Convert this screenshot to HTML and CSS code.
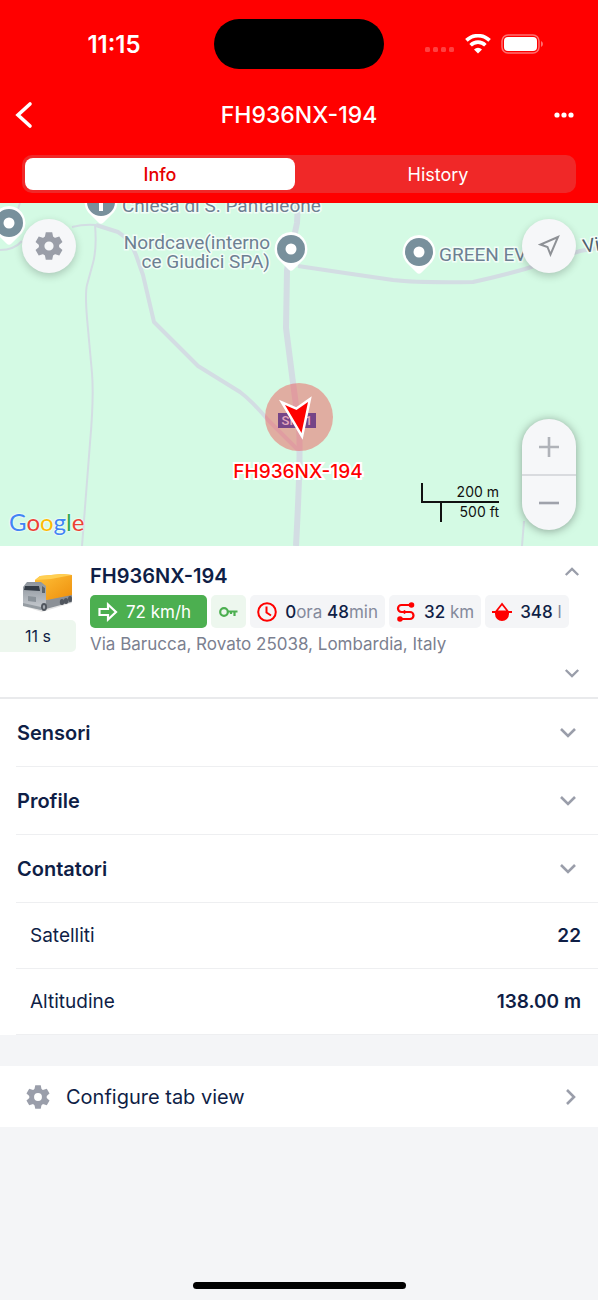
FILE: index.html
```html
<!DOCTYPE html>
<html lang="it">
<head>
    <meta charset="UTF-8">
    <meta name="viewport" content="width=device-width, initial-scale=1.0">
    <title>FH936NX-194</title>
    <link rel="stylesheet" href="styles.css">
</head>
<body>
    <svg class="defs" width="0" height="0" aria-hidden="true">
        <symbol id="gear" viewBox="-14 -14 28 28">
            <circle r="7.4" fill="none" stroke="currentColor" stroke-width="5.6"/>
            <g fill="currentColor">
                <path id="teeth" d="M-4.4 -8 L-3.2 -13.7 H3.2 L4.4 -8 Z M-4.4 8 L-3.2 13.7 H3.2 L4.4 8 Z"/>
                <use href="#teeth" transform="rotate(60)"/>
                <use href="#teeth" transform="rotate(120)"/>
            </g>
        </symbol>
        <symbol id="down" viewBox="0 0 18 12">
            <path d="M2 2 L9 9 L16 2" fill="none" stroke="currentColor" stroke-width="2.6"/>
        </symbol>
        <symbol id="pin" viewBox="0 0 36 42">
            <path d="M18 1 A17 17 0 0 1 31 28 L20.5 38.5 Q18 41 15.5 38.5 L5 28 A17 17 0 0 1 18 1 Z" fill="#fff"/>
            <circle cx="18" cy="18" r="14" fill="#78909c"/>
        </symbol>
    </svg>

    <header>
        <div class="status">
            <span class="time">11:15</span>
            <span class="island"></span>
            <span class="signals">
                <svg width="30" height="20" viewBox="0 0 30 20" fill="#ff4040">
                    <rect x="0" y="13" width="5" height="5" rx="1.5"/>
                    <rect x="8" y="13" width="5" height="5" rx="1.5"/>
                    <rect x="16" y="13" width="5" height="5" rx="1.5"/>
                    <rect x="24" y="13" width="5" height="5" rx="1.5"/>
                </svg>
                <svg width="26" height="20" viewBox="0 0 26 20" fill="none" stroke="#fff" stroke-width="3.6">
                    <path d="M1.4 6.4 A16.5 16.5 0 0 1 24.6 6.4"/>
                    <path d="M5.6 11.2 A10.5 10.5 0 0 1 20.4 11.2"/>
                    <path d="M13 19.5 L9 15.4 A6 6 0 0 1 17 15.4 Z" fill="#fff" stroke="none"/>
                </svg>
                <svg width="42" height="20" viewBox="0 0 42 20">
                    <rect x="1" y="1" width="37" height="18" rx="6" fill="none" stroke="#ff7070" stroke-width="1.5"/>
                    <rect x="3" y="3" width="33" height="14" rx="4" fill="#fff"/>
                    <path d="M40 7 Q42 8 42 10 Q42 12 40 13 Z" fill="#ff7070"/>
                </svg>
            </span>
        </div>
        <div class="title-bar">
            <button class="icon-button" aria-label="Back">
                <svg width="18" height="28" viewBox="0 0 18 28"><path d="M15 3 L3 14 L15 25" fill="none" stroke="#fff" stroke-width="3.6" stroke-linecap="round"/></svg>
            </button>
            <h1>FH936NX-194</h1>
            <button class="icon-button more" aria-label="More">
                <svg width="20" height="6" viewBox="0 0 20 6" fill="#fff"><circle cx="3" cy="3" r="2.6"/><circle cx="10" cy="3" r="2.6"/><circle cx="17" cy="3" r="2.6"/></svg>
            </button>
        </div>
        <nav class="tabs">
            <button class="tab active">Info</button>
            <button class="tab">History</button>
        </nav>
    </header>

    <section class="map">
        <svg class="map-canvas" viewBox="0 0 598 343" preserveAspectRatio="xMidYMid slice">
            <g class="roads">
                <path class="thin" d="M95 22 Q97 45 93 60 L87 82 Q85 90 87 115 L92 170 Q94 195 90 240 L82 343"/>
                <path class="thin" d="M0 47 Q14 47 22 38 M20 0 L16 12 M72 24 Q84 21 96 22"/>
                <path class="thin" d="M524 318 L522 343"/>
                <path d="M96 22 L118 29 Q130 36 136 52 L143 72 L154 119 L198 163 L240 189 Q252 198 268 217 L298 247"/>
                <path d="M298 63 L345 70 L393 77 Q420 80 473 79 Q500 73 525 66 L580 48 L598 45"/>
                <path class="wide" d="M298 0 L297 20 L287 67 L286 125 L292 172 L299 225 Q301 250 296 343"/>
            </g>
            <use href="#pin" x="-9" y="2" width="36" height="42"/>
            <circle cx="9" cy="20" r="5.5" fill="#fff"/>
            <use href="#pin" x="83" y="-19" width="36" height="42"/>
            <path d="M101 0 V8" stroke="#fff" stroke-width="4"/>
            <use href="#pin" x="273" y="28" width="36" height="42"/>
            <circle cx="291" cy="46" r="5.5" fill="#fff"/>
            <use href="#pin" x="401" y="31" width="36" height="42"/>
            <circle cx="419" cy="49" r="5.5" fill="#fff"/>
            <g class="place">
                <text x="122" y="9">Chiesa di S. Pantaleone</text>
                <text x="270" y="46" text-anchor="end">Nordcave(interno</text>
                <text x="270" y="65" text-anchor="end">ce Giudici SPA)</text>
                <text x="439" y="58">GREEN EV</text>
                <text class="street" x="584" y="50" transform="rotate(-10 584 50)">Via</text>
            </g>
            <circle cx="299" cy="214" r="34" fill="#f05050" fill-opacity="0.45"/>
            <rect x="278" y="210" width="38" height="15" fill="#754587"/>
            <text class="sign" x="297" y="222" text-anchor="middle">SP11</text>
            <path d="M285 202 L296.5 207 L308 199 L301.5 230 Z" fill="#f00" stroke="#fff" stroke-width="5" paint-order="stroke"/>
            <text class="vehicle" x="298" y="275" text-anchor="middle">FH936NX-194</text>
        </svg>

        <button class="round settings" aria-label="Map settings">
            <svg width="28" height="28"><use href="#gear"/></svg>
        </button>
        <button class="round locate" aria-label="Locate">
            <svg width="22" height="22" viewBox="0 0 22 22"><path d="M20 2 L2.5 9.5 L9.5 12 L12.5 19.5 Z" fill="none" stroke="#8e9196" stroke-width="2"/></svg>
        </button>
        <div class="zoom">
            <button aria-label="Zoom in"><svg width="20" height="20" viewBox="0 0 20 20"><path d="M0 10 H20 M10 0 V20" stroke="#b0b3b9" stroke-width="2.6"/></svg></button>
            <button aria-label="Zoom out"><svg width="20" height="20" viewBox="0 0 20 20"><path d="M0 10 H20" stroke="#9fa2ab" stroke-width="2.6"/></svg></button>
        </div>
        <div class="scale">
            <span class="metric">200 m</span>
            <span class="imperial">500 ft</span>
        </div>
        <div class="google"><span class="blue">G</span><span class="red">o</span><span class="yellow">o</span><span class="blue">g</span><span class="green">l</span><span class="red">e</span></div>
    </section>

    <section class="unit">
        <div class="unit-side">
            <svg class="truck" width="54" height="44" viewBox="0 0 54 44">
                <defs>
                    <linearGradient id="box" x1="0" y1="0" x2="1" y2="1">
                        <stop offset="0" stop-color="#ffc23a"/>
                        <stop offset="1" stop-color="#ee8f0c"/>
                    </linearGradient>
                    <linearGradient id="cab" x1="0" y1="0" x2="0" y2="1">
                        <stop offset="0" stop-color="#8d949c"/>
                        <stop offset="1" stop-color="#c9cdd2"/>
                    </linearGradient>
                </defs>
                <path d="M3 36 L22 42 L52 33 L50 28 L10 30 Z" fill="#000" opacity="0.1"/>
                <path d="M24 30 L52 24 V32 L26 39 Z" fill="#8b9096"/>
                <path d="M15 10 L20 6 L42 4 L52 5 V25 L27 30 L15 27 Z" fill="url(#box)"/>
                <path d="M15 10 L20 6 L42 4 L52 5 L31 9 Z" fill="#ffcf52"/>
                <path d="M3 17 L7 12 L21 12 L26 16 V37 L21 40 L3 35 Z" fill="url(#cab)"/>
                <path d="M5 16 L19 16 L20 21 L4 20 Z" fill="#343c46"/>
                <path d="M22 16 L25 18 V23 L22 23 Z" fill="#5b646d"/>
                <path d="M8 26 L16 27 V32 L8 31 Z" fill="#8a9299"/>
                <path d="M3 33 L21 37 V40 L3 36 Z" fill="#959ca2"/>
                <ellipse cx="24" cy="37" rx="3" ry="4" fill="#50565e"/>
                <ellipse cx="24" cy="37" rx="1.2" ry="2" fill="#a5abb2"/>
                <ellipse cx="42" cy="32" rx="2.2" ry="3" fill="#50565e"/>
                <ellipse cx="46" cy="31" rx="2.2" ry="3" fill="#50565e"/>
                <ellipse cx="50" cy="29" rx="2" ry="3" fill="#50565e"/>
            </svg>
            <span class="ago">11 s</span>
        </div>
        <div class="unit-info">
            <h2>FH936NX-194</h2>
            <div class="chips">
                <span class="chip speed">
                    <svg width="20" height="20" viewBox="0 0 20 20"><path d="M1.5 7 H10 V2.5 L18 10 L10 17.5 V13 H1.5 Z" fill="none" stroke="#fff" stroke-width="2.2"/></svg>
                    72 km/h
                </span>
                <span class="chip key">
                    <svg width="19" height="12" viewBox="0 0 19 12" fill="none" stroke="#4caf50" stroke-width="2.2"><circle cx="5" cy="6" r="3.8"/><path d="M9 5.5 H18.5 M15.5 5.5 V10 M12 5.5 V8"/></svg>
                </span>
                <span class="chip">
                    <svg width="20" height="20" viewBox="0 0 20 20" fill="none" stroke="#f00" stroke-width="2"><circle cx="10" cy="10" r="8.8"/><path d="M9.5 4.5 V10.5 L14 13.5"/></svg>
                    <span><b>0</b>ora <b>48</b>min</span>
                </span>
                <span class="chip">
                    <svg width="20" height="20" viewBox="0 0 20 20" fill="none" stroke="#f00" stroke-width="2.2"><path d="M15 3 H5.5 A3.5 3.5 0 0 0 5.5 10 H14 A3.5 3.5 0 0 1 14 17 H4"/><circle cx="15.5" cy="3" r="1.7" fill="#f00"/><circle cx="4" cy="17" r="1.7" fill="#f00"/><path d="M8 8.5 L11 10 L8 11.5 Z" fill="#f00" stroke-width="1"/></svg>
                    <span><b>32</b> km</span>
                </span>
                <span class="chip">
                    <svg width="20" height="20" viewBox="0 0 20 20" fill="#f00"><path d="M10 2 L4 9.5 H16 Z" fill="none" stroke="#f00" stroke-width="1.8"/><path d="M0 9 H20 V11 H17 A7 7 0 0 1 3 11 H0 Z M3 10 H17 V12 A7 7 0 0 1 3 12 Z"/></svg>
                    <span><b>348</b> l</span>
                </span>
            </div>
            <p class="address">Via Barucca, Rovato 25038, Lombardia, Italy</p>
        </div>
        <div class="unit-nav">
            <button aria-label="Previous"><svg class="up" width="16" height="11"><use href="#down"/></svg></button>
            <button aria-label="Next"><svg width="16" height="11"><use href="#down"/></svg></button>
        </div>
    </section>

    <main>
        <button class="row group">Sensori <svg width="18" height="12"><use href="#down"/></svg></button>
        <button class="row group">Profile <svg width="18" height="12"><use href="#down"/></svg></button>
        <button class="row group">Contatori <svg width="18" height="12"><use href="#down"/></svg></button>
        <dl>
            <div class="row"><dt>Satelliti</dt><dd>22</dd></div>
            <div class="row"><dt>Altitudine</dt><dd>138.00 m</dd></div>
        </dl>
    </main>

    <button class="configure">
        <svg width="24" height="24"><use href="#gear"/></svg>
        <span>Configure tab view</span>
        <svg width="12" height="18" viewBox="0 0 12 18"><path d="M2 2 L9 9 L2 16" fill="none" stroke="currentColor" stroke-width="2.6"/></svg>
    </button>

    <footer><span class="home"></span></footer>
</body>
</html>
```
FILE: styles.css
```css
* {
    margin: 0;
    padding: 0;
    box-sizing: border-box;
}
body {
    display: flex;
    flex-direction: column;
    min-height: 100vh;
    background: #f4f5f7;
    color: #0f1e46;
    font-family: Inter, "Liberation Sans", sans-serif;
    font-size: 18px;
}
button {
    border: none;
    background: none;
    color: inherit;
    font: inherit;
    cursor: pointer;
}
svg {
    display: block;
    flex-shrink: 0;
}
.defs {
    position: absolute;
}

/* header */
header {
    background: #f00;
    color: white;
    padding: 19px 0 10px;
}
.status {
    display: grid;
    grid-template-columns: 1fr 170px 1fr;
    align-items: center;
    height: 50px;
}
.time {
    padding-left: 14px;
    text-align: center;
    font-size: 24px;
    font-weight: 600;
}
.island {
    height: 50px;
    border-radius: 25px;
    background: black;
}
.signals {
    display: flex;
    justify-content: center;
    gap: 10px;
    padding-right: 14px;
}
.title-bar {
    display: grid;
    grid-template-columns: 60px 1fr 60px;
    align-items: center;
    height: 52px;
    margin: 20px 0 14px;
}
.title-bar h1 {
    text-align: center;
    font-size: 23px;
    font-weight: 500;
}
.icon-button {
    display: flex;
    align-items: center;
    height: 52px;
    padding: 0 15px;
}
.more {
    justify-content: flex-end;
    padding-right: 24px;
}
.tabs {
    display: flex;
    gap: 8px;
    height: 38px;
    margin: 0 22px;
    padding: 3px;
    border-radius: 10px;
    background: #f02828;
}
.tab {
    flex: 1;
    border-radius: 8px;
    font-size: 18px;
}
.tab.active {
    background: white;
    color: #e60000;
    font-weight: 500;
}

/* map */
.map {
    position: relative;
    height: 343px;
    overflow: hidden;
    background: #d4fae4;
}
.map-canvas {
    width: 100%;
    height: 100%;
}
.roads path {
    fill: none;
    stroke: #d3dde3;
    stroke-width: 4;
    stroke-linejoin: round;
}
.roads .thin {
    stroke-width: 2;
}
.roads .wide {
    stroke-width: 6;
}
.place text {
    font-family: Roboto, sans-serif;
    font-size: 19px;
    fill: #6d8092;
    stroke: #f2fdf7;
    stroke-width: 3;
    paint-order: stroke;
}
.place .street {
    fill: #50606c;
}
.sign {
    font-family: Roboto, sans-serif;
    font-size: 13px;
    font-weight: 500;
    fill: #e3a9bd;
}
.vehicle {
    font-size: 19px;
    font-weight: 500;
    fill: #f00;
    stroke: white;
    stroke-width: 4;
    paint-order: stroke;
}
.round {
    position: absolute;
    top: 16px;
    display: flex;
    align-items: center;
    justify-content: center;
    width: 54px;
    height: 54px;
    border-radius: 50%;
    background: #f6f7f9;
    box-shadow: 0 3px 8px rgba(0,0,0,0.2);
    color: #9a9ea8;
}
.settings {
    left: 22px;
}
.locate {
    right: 22px;
}
.zoom {
    position: absolute;
    right: 22px;
    bottom: 16px;
    width: 54px;
    border-radius: 27px;
    background: #f6f7f9;
    box-shadow: 0 1px 10px rgba(0,0,0,0.35);
}
.zoom button {
    display: flex;
    align-items: center;
    justify-content: center;
    width: 100%;
    height: 55px;
}
.zoom button + button {
    border-top: 2px solid #d9dbdf;
    height: 56px;
}
.scale {
    position: absolute;
    right: 99px;
    bottom: 24px;
    width: 78px;
    color: #111;
    font-size: 14px;
    line-height: 18px;
    text-align: right;
}
.scale span {
    display: block;
}
.metric {
    height: 20px;
    border: solid #111;
    border-width: 0 0 2px 2px;
}
.imperial {
    height: 19px;
    margin-left: 19px;
    border-left: 2px solid #111;
}
.google {
    position: absolute;
    left: 9px;
    bottom: 9px;
    font-family: Lato, sans-serif;
    font-size: 24px;
    line-height: 30px;
    text-shadow: 0 0 2px white, 0 0 2px white;
}
.blue {
    color: #4285f4;
}
.red {
    color: #ea4335;
}
.yellow {
    color: #fbbc05;
}
.green {
    color: #34a853;
}

/* unit */
.unit {
    display: flex;
    height: 153px;
    background: white;
    border-bottom: 2px solid #e9eaec;
}
.unit-side {
    flex-shrink: 0;
    width: 76px;
    padding-top: 24px;
}
.truck {
    margin: 0 0 6px 20px;
}
.ago {
    display: block;
    height: 32px;
    border-radius: 0 5px 5px 0;
    background: #edf7ee;
    font-size: 16px;
    line-height: 32px;
    text-align: center;
}
.unit-info {
    flex: 1;
    padding: 18px 0 0 14px;
}
.unit-info h2 {
    font-size: 20px;
    line-height: 24px;
    font-weight: 600;
}
.chips {
    display: flex;
    gap: 4px;
    margin: 7px 0 5px;
}
.chip {
    display: flex;
    align-items: center;
    gap: 8px;
    height: 33px;
    padding: 0 7px;
    border-radius: 5px;
    background: #f4f5f7;
    color: #848a9c;
    font-size: 17px;
    white-space: nowrap;
}
.chip b {
    color: #0f1e46;
    font-weight: 500;
}
.speed {
    padding: 0 16px 0 8px;
    background: #4caf50;
    color: white;
}
.key {
    padding: 0 8px;
    background: #edf7ee;
}
.address {
    color: #7b8090;
    font-size: 17px;
    line-height: 22px;
    white-space: nowrap;
}
.unit-nav {
    display: flex;
    flex-direction: column;
    justify-content: space-between;
    padding: 15px 13px 13px;
    margin-left: -42px;
    color: #9a9eaa;
}
.unit-nav button {
    padding: 5px;
}
.up {
    transform: rotate(180deg);
}

/* rows */
main {
    background: white;
    padding-left: 16px;
}
.row {
    display: flex;
    align-items: center;
    justify-content: space-between;
    width: 100%;
    height: 66px;
    padding: 0 17px 0 14px;
    border-bottom: 1px solid #eeeff1;
    font-size: 19px;
}
.group {
    height: 68px;
    padding: 0 21px 0 1px;
    font-size: 20px;
    font-weight: 600;
}
.group svg, .configure svg {
    color: #9a9eaa;
}
dd {
    font-weight: 600;
}
.configure {
    display: flex;
    align-items: center;
    gap: 16px;
    height: 61px;
    margin-top: 31px;
    padding: 0 21px 0 26px;
    background: white;
    font-size: 20px;
    text-align: left;
}
.configure span {
    flex: 1;
}
footer {
    display: flex;
    justify-content: center;
    margin-top: auto;
    padding-bottom: 11px;
}
.home {
    width: 213px;
    height: 7px;
    border-radius: 4px;
    background: black;
}
```
